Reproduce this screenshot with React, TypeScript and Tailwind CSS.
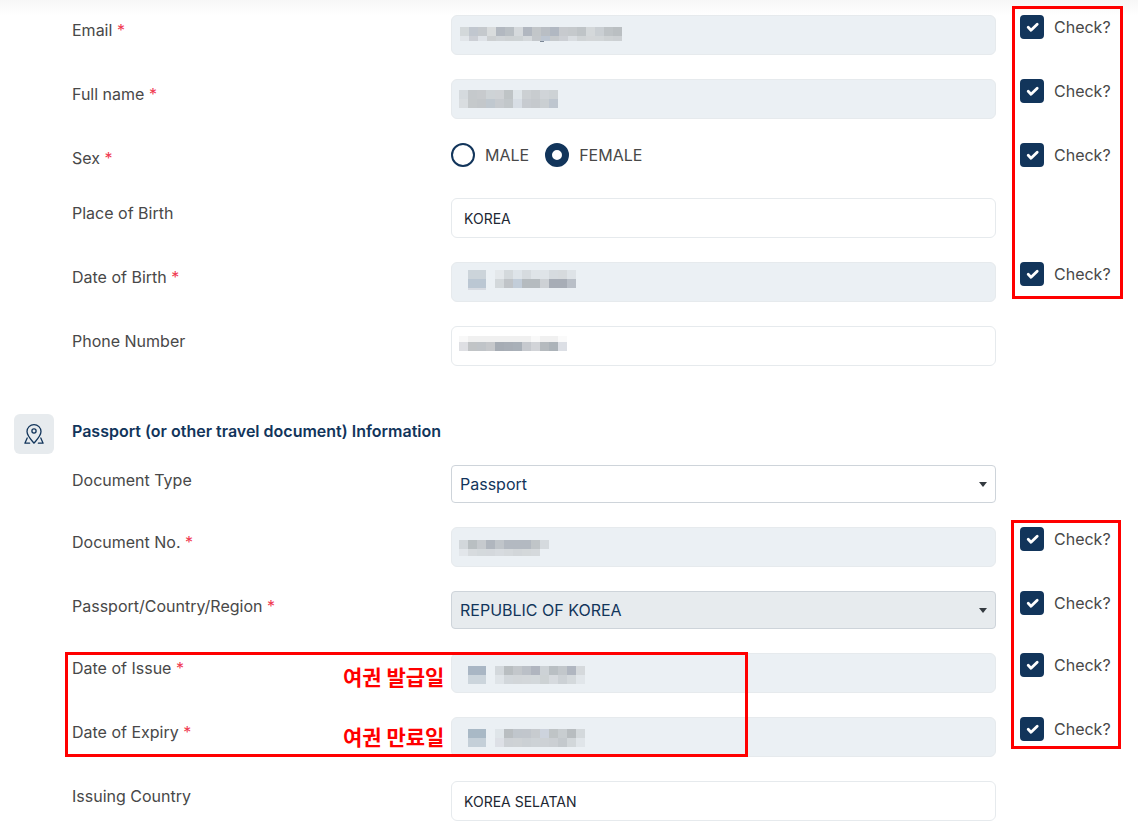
import { ReactNode } from "react";
import clsx from "clsx";

type Block = {
  x: number;
  y: number;
  cell?: number;
  rows: { h: number; colors: string }[];
};

// pixelated blocks that hide the personal values, one hex colour per cell
const emailMask: Block[] = [
  {
    x: 9,
    y: 12,
    rows: [
      { h: 9, colors: "d3d8da c1c7cf c5c9cd d9dcdd b2b8c0 b9bfc4 d5d9dc b1b7c0 c2c6c9 b9bec4 b1b8c2 c7cace c5c9cc bfc4c7 d4d8da cacfd3 bec3c6 babfc2" },
      { h: 5, colors: "e1e5e9 cccfd5 dfe3e8 cdd0d2 d0d4d7 ced2d4 ced3d5 d5d9dc c3c7cb bdc6d2 c6cacd cccfd4 d9dde1 d0d4d6 d3d6d8 d2d6d8 ced2d4 ccd0d3" },
    ],
  },
  { x: 89, y: 26, cell: 4, rows: [{ h: 1, colors: "7b8796" }] },
];

const nameMask: Block[] = [
  {
    x: 8,
    y: 11,
    rows: [
      { h: 9, colors: "d5dade c5c9cc c7cacd ced3d6 cfd2d5 bfc4c6 dfe5e9 ccd0d3 c8cccf d0d4d8 cdd2d5" },
      { h: 9, colors: "d9dde0 c5c9cb c3c7ca c0c8cf c7cbcf c2c7ca d8dee5 c7cbd0 c5c9cd cacfd2 bec6cf" },
    ],
  },
];

const birthMask: Block[] = [
  {
    x: 17,
    y: 8,
    cell: 18,
    rows: [
      { h: 9, colors: "ccd4da" },
      { h: 9, colors: "bbc7d3" },
      { h: 2, colors: "d7dbe2" },
    ],
  },
  {
    x: 44,
    y: 8,
    rows: [
      { h: 9, colors: "e4e8eb d4d9dc dee4e9 d6dbdf dfe4e8 dfe4e8 d6dbdf d6dadd dee3e7" },
      { h: 9, colors: "d3d8db c0c4c8 c2cdd9 b5bbbf b5bbbf cdd1d5 a7adb6 a7adb6 b9bfc7" },
    ],
  },
];

const phoneMask: Block[] = [
  {
    x: 8,
    y: 10,
    rows: [
      { h: 6, colors: "f8f8f8 f0f0f0 f0f0f0 f0f0f0 f0f0f0 f0f0f0 f0f0f0 f0f0f0 f9f9f9 f0f0f0 f0f0f0 fafafa" },
      { h: 9, colors: "dedfe3 c1c4c6 c0c4c8 c6c8cb a6acb4 a8aeb6 a9b0b8 c6c9ce d2d4d8 b5babe acb3b9 dcdfe5" },
    ],
  },
];

const documentMask: Block[] = [
  {
    x: 8,
    y: 13,
    rows: [
      { h: 9, colors: "d2d7db b9bfc2 c6cace b0b6be c0c5ca b3b9c1 b3b9c1 b3b9c1 c0c5c8 d5dade" },
      { h: 7, colors: "e2e6ea d7dbde d4d9dc d4d8dc d7dbdf d5d9dc d2d6d9 d4d8da d5d9dc" },
    ],
  },
];

const issueMask: Block[] = [
  { x: 17, y: 13, cell: 18, rows: [{ h: 9, colors: "a9b6c4" }, { h: 9, colors: "ccd5dc" }] },
  {
    x: 44,
    y: 13,
    rows: [
      { h: 9, colors: "d3d8dc b9bec1 c3c7cb bbc0c7 b0b5bf cdd2d6 b9bfc3 c2c7cb b0b6c0 d5d9dc" },
      { h: 9, colors: "dfe4e8 d2d7db d2d6d9 d3d7da d3d8db cdd2d4 d6dade ccd1d5 d4d9dc e1e6ea" },
    ],
  },
];

const expiryMask: Block[] = [
  { x: 17, y: 12, cell: 18, rows: [{ h: 9, colors: "a9b9c6" }, { h: 9, colors: "c4cfd8" }] },
  {
    x: 44,
    y: 12,
    rows: [
      { h: 9, colors: "dfe5e9 b9bec1 c0c6cc c1c6cc c7cbcf cdd3dd bfc4c6 c8cdd0 b8bdc0 d4d9dc" },
      { h: 9, colors: "dde0e6 cdd1d5 ced2d5 cbd0d4 cdd2d6 cdd1d5 cbcfd3 c4c9cd d2d7da e0e5e9" },
    ],
  },
];

function Mask({ blocks }: { blocks: Block[] }) {
  return (
    <svg className="pointer-events-none absolute inset-0 h-full w-full" shapeRendering="crispEdges" aria-hidden="true">
      {blocks.map((block, b) => {
        const cell = block.cell ?? 9;
        let y = block.y;
        return block.rows.map((row, r) => {
          const top = y;
          y += row.h;
          return row.colors.split(" ").map((color, c) => (
            <rect key={`${b}-${r}-${c}`} x={block.x + c * cell} y={top} width={cell} height={row.h} fill={`#${color}`} />
          ));
        });
      })}
    </svg>
  );
}

function Check({ id }: { id: string }) {
  return (
    <label htmlFor={id} className="flex h-6 items-center gap-2.5">
      <span className="relative h-6 w-6 shrink-0">
        <input id={id} type="checkbox" defaultChecked className="peer block h-6 w-6 appearance-none rounded border-2 border-[#12355b] bg-white checked:bg-[#12355b]" />
        <svg viewBox="0 0 24 24" className="pointer-events-none absolute inset-0 hidden h-6 w-6 peer-checked:block" fill="none" stroke="white" strokeWidth="2.8" strokeLinecap="round" strokeLinejoin="round">
          <path d="M8.2 12.3 11 15.2 17.2 9.3" />
        </svg>
      </span>
      Check?
    </label>
  );
}

type RowProps = {
  id: string;
  label: string;
  required?: boolean;
  check?: boolean;
  group?: boolean;
  children: ReactNode;
};

function Row({ id, label, required, check, group, children }: RowProps) {
  const text = (
    <>
      {label} {required && <span className="text-[#f0384f]">*</span>}
    </>
  );
  return (
    <div className="grid min-h-[31px] grid-cols-[71fr_109fr_94px] items-start gap-x-6">
      {group ? (
        <span id={id} className="pt-[3px]">{text}</span>
      ) : (
        <label htmlFor={id} className="pt-[3px]">{text}</label>
      )}
      {children}
      {check && <Check id={`${id}-check`} />}
    </div>
  );
}

function TextField({ id, value, disabled, mask }: { id: string; value?: string; disabled?: boolean; mask?: Block[] }) {
  return (
    <div className="relative">
      <input
        id={id}
        type="text"
        defaultValue={value}
        disabled={disabled}
        className="block h-10 w-full rounded-md border border-[#e6eaed] bg-white px-3 text-sm text-[#212733] disabled:bg-[#ebf0f4]"
      />
      {mask && <Mask blocks={mask} />}
    </div>
  );
}

function SelectField({ id, value, disabled }: { id: string; value: string; disabled?: boolean }) {
  return (
    <div className="relative">
      <select
        id={id}
        disabled={disabled}
        className="block h-[38px] w-full appearance-none rounded border border-[#ced4da] bg-white px-2 text-[#12355b] opacity-100 disabled:bg-[#e7ebee]"
      >
        <option>{value}</option>
      </select>
      <svg viewBox="0 0 8 5" className="pointer-events-none absolute top-[17px] right-[9px] h-[5px] w-2" fill="#343a40">
        <path d="M0 0H8L4 5Z" />
      </svg>
    </div>
  );
}

function SexOption({ value, checked }: { value: string; checked?: boolean }) {
  return (
    <label className="flex items-center gap-2.5">
      <input
        type="radio"
        name="sex"
        value={value}
        defaultChecked={checked}
        className="h-6 w-6 appearance-none rounded-full border-2 border-[#12355b] bg-white checked:border-[7px]"
      />
      {value}
    </label>
  );
}

function Section({ icon, children }: { icon?: ReactNode; children: ReactNode }) {
  return (
    <section className="flex gap-[18px]">
      <div className="w-10 shrink-0">{icon}</div>
      <div className="min-w-0 flex-1">{children}</div>
    </section>
  );
}

function Outline({ className, children }: { className: string; children?: ReactNode }) {
  return <div className={clsx("pointer-events-none absolute border-3 border-[#ff0000]", className)}>{children}</div>;
}

const pinIcon = (
  <div className="h-10 w-10 rounded-md bg-[#e7ebee]">
    <svg viewBox="0 0 40 40" className="h-10 w-10" fill="none" stroke="#12355b" strokeWidth="1.3" strokeLinecap="round" strokeLinejoin="round">
      <path d="M20 29.2C17.5 26.2 13 21.8 13 17.6A7 7 0 0 1 27 17.6C27 21.8 22.5 26.2 20 29.2Z" />
      <circle cx="20" cy="17" r="2.1" />
      <path d="M13.2 24 10.9 29.2H15.6M26.8 24 29.1 29.2H24.4" />
    </svg>
  </div>
);

export default function App() {
  return (
    <main className="min-h-screen bg-white font-['Inter','Noto_Sans_CJK_KR',sans-serif] text-base text-[#484848]">
      <div className="h-[15px] bg-linear-to-b from-[#f7f7f7] to-white" />
      <form className="flex flex-col gap-12 pr-6 pb-2 pl-3.5">
        <Section>
          <div className="flex flex-col gap-6">
            <div className="relative flex flex-col gap-6">
              <Row id="email" label="Email" required check>
                <TextField id="email" disabled mask={emailMask} />
              </Row>
              <Row id="full-name" label="Full name" required check>
                <TextField id="full-name" disabled mask={nameMask} />
              </Row>
              <Row id="sex" label="Sex" required check group>
                <div role="radiogroup" aria-labelledby="sex" className="flex gap-4">
                  <SexOption value="MALE" />
                  <SexOption value="FEMALE" checked />
                </div>
              </Row>
              <Row id="birth-place" label="Place of Birth">
                <TextField id="birth-place" value="KOREA" />
              </Row>
              <Row id="birth-date" label="Date of Birth" required check>
                <TextField id="birth-date" disabled mask={birthMask} />
              </Row>
              <Outline className="-top-[9px] -right-[9px] bottom-[3px] w-[111px]" />
            </div>
            <Row id="phone" label="Phone Number">
              <TextField id="phone" mask={phoneMask} />
            </Row>
          </div>
        </Section>

        <Section icon={pinIcon}>
          <h2 className="pt-[5px] pb-[22px] font-semibold text-[#12355b]">Passport (or other travel document) Information</h2>
          <div className="flex flex-col gap-6">
            <Row id="document-type" label="Document Type">
              <SelectField id="document-type" value="Passport" />
            </Row>
            <div className="relative flex flex-col gap-6">
              <Row id="document-no" label="Document No." required check>
                <TextField id="document-no" disabled mask={documentMask} />
              </Row>
              <Row id="region" label="Passport/Country/Region" required check>
                <SelectField id="region" value="REPUBLIC OF KOREA" disabled />
              </Row>
              <div className="relative flex flex-col gap-6">
                <Row id="issue-date" label="Date of Issue" required check>
                  <TextField id="issue-date" disabled mask={issueMask} />
                </Row>
                <Row id="expiry-date" label="Date of Expiry" required check>
                  <TextField id="expiry-date" disabled mask={expiryMask} />
                </Row>
                <Outline className="-top-px bottom-0 -left-[7px] w-[683px]">
                  <div className="flex flex-col gap-[30px] pt-1.5 pl-[275px] font-['Noto_Sans_CJK_KR',sans-serif] text-[21px] leading-[30px] font-bold text-[#ff0000]">
                    <p>여권 발급일</p>
                    <p>여권 만료일</p>
                  </div>
                </Outline>
              </div>
              <Outline className="-top-[7px] -right-[7px] bottom-2 w-[110px]" />
            </div>
            <Row id="issuing-country" label="Issuing Country">
              <TextField id="issuing-country" value="KOREA SELATAN" />
            </Row>
          </div>
        </Section>
      </form>
    </main>
  );
}
